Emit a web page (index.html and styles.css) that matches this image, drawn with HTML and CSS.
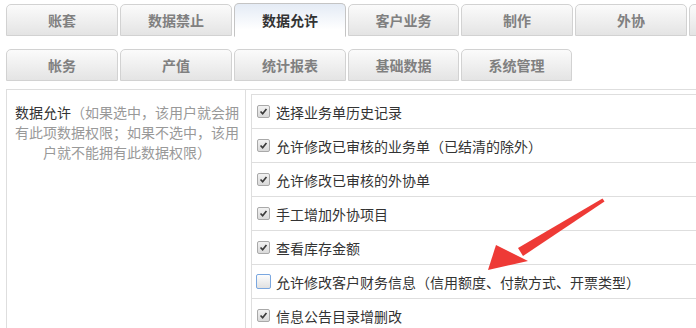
FILE: index.html
```html
<!DOCTYPE html>
<html lang="zh-CN">
<head>
  <meta charset="UTF-8">
  <title>权限设置</title>
  <link rel="stylesheet" href="styles.css">
</head>
<body>

  <div class="tabs tabs-top">
    <a class="tab" href="#">账套</a>
    <a class="tab" href="#">数据禁止</a>
    <a class="tab active" href="#">数据允许</a>
    <a class="tab" href="#">客户业务</a>
    <a class="tab" href="#">制作</a>
    <a class="tab" href="#">外协</a>
    <a class="tab" href="#">财务</a>
  </div>

  <div class="tabs tabs-second">
    <a class="tab" href="#">帐务</a>
    <a class="tab" href="#">产值</a>
    <a class="tab" href="#">统计报表</a>
    <a class="tab" href="#">基础数据</a>
    <a class="tab" href="#">系统管理</a>
  </div>

  <div class="perm-table">
    <div class="perm-desc">
      <span class="perm-name">数据允许</span>（如果选中，该用户就会拥有此项数据权限；如果不选中，该用户就不能拥有此数据权限）
    </div>
    <div class="perm-list">
      <label class="perm-row"><span class="box checked"><svg viewBox="0 0 13 13"><path d="M3 6.5 L5.5 9.2 L10 3.6" /></svg></span>选择业务单历史记录</label>
      <label class="perm-row"><span class="box checked"><svg viewBox="0 0 13 13"><path d="M3 6.5 L5.5 9.2 L10 3.6" /></svg></span>允许修改已审核的业务单（已结清的除外）</label>
      <label class="perm-row"><span class="box checked"><svg viewBox="0 0 13 13"><path d="M3 6.5 L5.5 9.2 L10 3.6" /></svg></span>允许修改已审核的外协单</label>
      <label class="perm-row"><span class="box checked"><svg viewBox="0 0 13 13"><path d="M3 6.5 L5.5 9.2 L10 3.6" /></svg></span>手工增加外协项目</label>
      <label class="perm-row"><span class="box checked"><svg viewBox="0 0 13 13"><path d="M3 6.5 L5.5 9.2 L10 3.6" /></svg></span>查看库存金额</label>
      <label class="perm-row"><span class="box focus"></span>允许修改客户财务信息（信用额度、付款方式、开票类型）</label>
      <label class="perm-row"><span class="box checked"><svg viewBox="0 0 13 13"><path d="M3 6.5 L5.5 9.2 L10 3.6" /></svg></span>信息公告目录增删改</label>
    </div>
  </div>

  <!-- annotation arrow drawn over the screenshot -->
  <svg class="arrow" width="696" height="328" viewBox="0 0 696 328">
    <path d="M602.5 198.5 L604.5 201.5 L523 256 L518 248 Z" fill="#ee3a36" />
    <path d="M488 270 L496 245 L528 261 Z" fill="#ee3a36" />
  </svg>

</body>
</html>
```

FILE: styles.css
```css
body {
  margin: 0;
  background-color: #fff;
  font-family: "Noto Sans CJK SC", "Noto Sans", sans-serif;
  font-size: 14px;
  color: #333;
  width: 696px;
  height: 328px;
  overflow: hidden;
  position: relative;
}
.tabs {
  display: flex;
  gap: 2px;
  padding-left: 6px;
  height: 32px;
  align-items: flex-end;
}
.tabs-top {
  margin-top: 4px;
}
.tabs-second {
  margin-top: 13px;
}
.tab {
  flex: 0 0 112px;
  box-sizing: border-box;
  height: 32px;
  line-height: 30px;
  text-align: center;
  text-decoration: none;
  font-weight: bold;
  color: #808080;
  border: 1px solid #d2d2d2;
  border-radius: 5px 5px 0 0;
  background: linear-gradient(#fbfbfb, #e4e4e4);
}
.tabs-second .tab:nth-child(4),
.tabs-second .tab:nth-child(5),
.tabs-top .tab:nth-child(4) {
  flex-basis: 111px;
}
.tab.active {
  height: 34px;
  margin-bottom: -1px;
  line-height: 32px;
  color: #333;
  border-color: #c4c4c4;
  border-bottom-color: #fff;
  background: linear-gradient(#e4ebf5, #fff 80%);
}
.perm-table {
  display: flex;
  margin-top: 8px;
  margin-left: 6px;
  width: 760px;
  border-top: 1px solid #dedede;
  border-left: 1px solid #dedede;
  height: 260px;
}
.perm-desc {
  box-sizing: border-box;
  width: 239px;
  padding: 12px 6px 0 8px;
  line-height: 20px;
  text-align: center;
  color: #999;
  border-right: 1px solid #dedede;
}
.perm-name {
  color: #333;
}
.perm-list {
  flex: 1;
  margin: 4px 0 0 5px;
  border-left: 1px solid #dedede;
}
.perm-row {
  display: flex;
  align-items: center;
  height: 33px;
  padding-left: 5px;
  border-top: 1px solid #dedede;
  color: #333;
}
.box {
  box-sizing: border-box;
  width: 13px;
  height: 13px;
  margin-right: 6px;
  border: 1px solid #a9a9a9;
  border-radius: 2px;
  background: linear-gradient(#f2f2f2, #d9d9d9);
  display: flex;
}
.box svg {
  width: 11px;
  height: 11px;
}
.box path {
  fill: none;
  stroke: #3a3a3a;
  stroke-width: 2;
}
.box.focus {
  width: 15px;
  height: 15px;
  margin-left: -1px;
  margin-right: 5px;
  border: 1px solid #7aa7e0;
  background: linear-gradient(#fdfdfd, #e1e1e1);
}
.arrow {
  position: absolute;
  left: 0;
  top: 0;
  pointer-events: none;
}
```
